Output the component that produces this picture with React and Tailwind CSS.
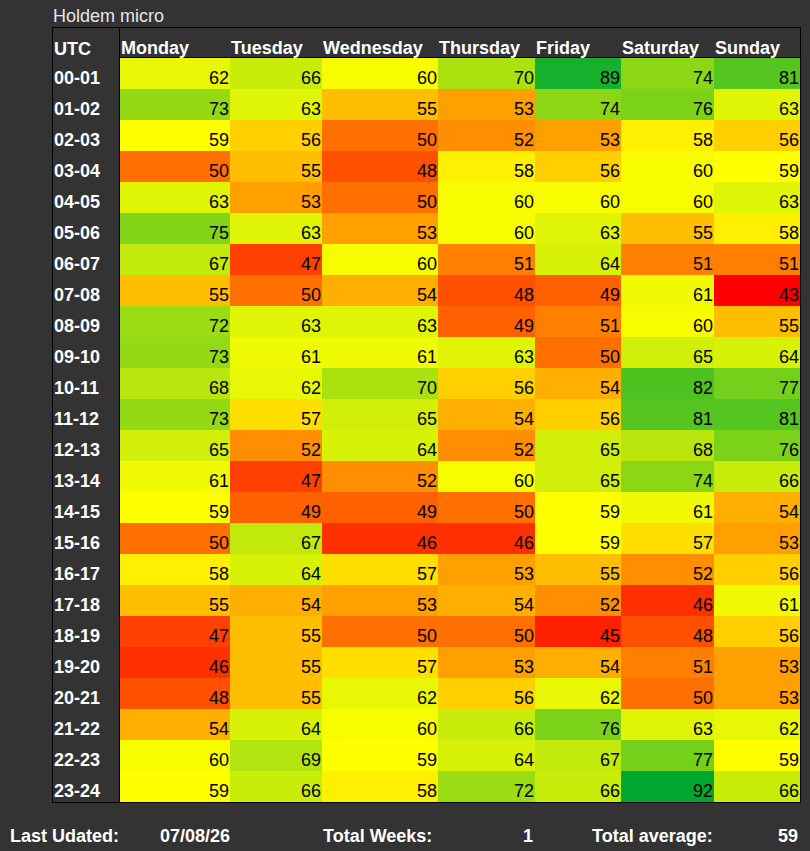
import React from "react";

const days = ["Monday", "Tuesday", "Wednesday", "Thursday", "Friday", "Saturday", "Sunday"];

const rows = [
  ["00-01", [62, 66, 60, 70, 89, 74, 81]],
  ["01-02", [73, 63, 55, 53, 74, 76, 63]],
  ["02-03", [59, 56, 50, 52, 53, 58, 56]],
  ["03-04", [50, 55, 48, 58, 56, 60, 59]],
  ["04-05", [63, 53, 50, 60, 60, 60, 63]],
  ["05-06", [75, 63, 53, 60, 63, 55, 58]],
  ["06-07", [67, 47, 60, 51, 64, 51, 51]],
  ["07-08", [55, 50, 54, 48, 49, 61, 43]],
  ["08-09", [72, 63, 63, 49, 51, 60, 55]],
  ["09-10", [73, 61, 61, 63, 50, 65, 64]],
  ["10-11", [68, 62, 70, 56, 54, 82, 77]],
  ["11-12", [73, 57, 65, 54, 56, 81, 81]],
  ["12-13", [65, 52, 64, 52, 65, 68, 76]],
  ["13-14", [61, 47, 52, 60, 65, 74, 66]],
  ["14-15", [59, 49, 49, 50, 59, 61, 54]],
  ["15-16", [50, 67, 46, 46, 59, 57, 53]],
  ["16-17", [58, 64, 57, 53, 55, 52, 56]],
  ["17-18", [55, 54, 53, 54, 52, 46, 61]],
  ["18-19", [47, 55, 50, 50, 45, 48, 56]],
  ["19-20", [46, 55, 57, 53, 54, 51, 53]],
  ["20-21", [48, 55, 62, 56, 62, 50, 53]],
  ["21-22", [54, 64, 60, 66, 76, 63, 62]],
  ["22-23", [60, 69, 59, 64, 67, 77, 59]],
  ["23-24", [59, 66, 58, 72, 66, 92, 66]],
];

function heat(v) {
  if (v <= 59) {
    const t = Math.max(0, (v - 43) / 16);
    return `rgb(255,${Math.round(255 * t)},0)`;
  }
  const t = Math.min(1, (v - 59) / 33);
  return `rgb(${Math.round(255 * (1 - t))},${Math.round(255 - 87 * t)},${Math.round(48 * t)})`;
}

export default function App() {
  return (
    <div
      className="min-h-[851px] w-full bg-[#333333] text-[18px] leading-[normal]"
      style={{ fontFamily: '"Liberation Sans", Arial, sans-serif' }}
    >
      <div className="pl-[53px] pt-[6px] text-[18px] leading-[21px] text-[#e6e6e6]">Holdem micro</div>
      <div className="ml-[52px] w-[749px] border border-black">
        <div className="grid grid-cols-[67px_110px_92px_116px_97px_86px_93px_86px]">
          <div className="flex h-[30px] items-end border-r border-black pl-[1px] leading-[18px] font-bold text-white">
            UTC
          </div>
          {days.map((d) => (
            <div
              key={d}
              className="flex h-[30px] items-end border-b border-black pl-[1px] leading-[18px] font-bold text-white"
            >
              {d}
            </div>
          ))}
          {rows.map(([label, vals]) => (
            <React.Fragment key={label}>
              <div className="flex h-[31px] items-end border-r border-black pl-[1px] font-bold text-white">
                {label}
              </div>
              {vals.map((v, i) => (
                <div
                  key={i}
                  className="flex h-[31px] items-end justify-end pr-[1px] text-black"
                  style={{ backgroundColor: heat(v) }}
                >
                  {v}
                </div>
              ))}
            </React.Fragment>
          ))}
        </div>
      </div>
      <div className="mt-[23px] grid grid-cols-[150px_70px_92px_213px_57px_208px] pl-[10px] font-bold text-white">
        <div>Last Udated:</div>
        <div className="pr-[1px] text-right">07/08/26</div>
        <div></div>
        <div className="flex justify-between pl-[1px] pr-[2px]">
          <span>Total Weeks:</span>
          <span>1</span>
        </div>
        <div></div>
        <div className="flex justify-between pr-[2px]">
          <span>Total average:</span>
          <span>59</span>
        </div>
      </div>
    </div>
  );
}
